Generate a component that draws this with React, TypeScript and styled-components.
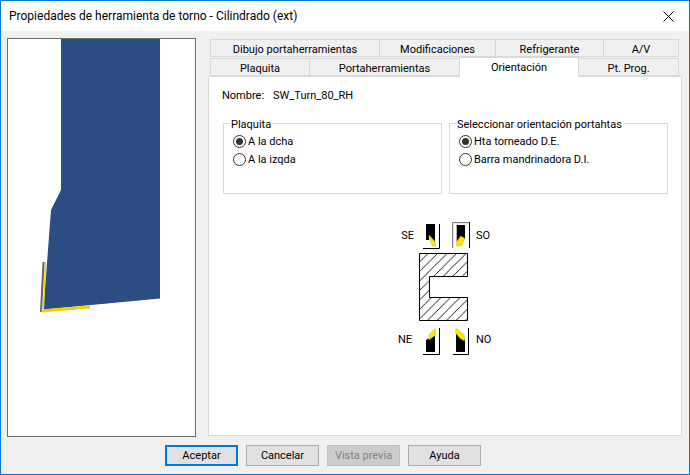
import { createGlobalStyle, styled } from "styled-components";

const GlobalStyle = createGlobalStyle`
  html, body { margin: 0; padding: 0; background: #f0f0f0; }
  body { font-family: Roboto, "Liberation Sans", sans-serif; font-size: 11px; color: #000; }
  * { box-sizing: border-box; }
`;

const Window = styled.div`
  width: 690px;
  height: 475px;
  border: 1px solid #0078d7;
  background: #f0f0f0;
  display: flex;
  flex-direction: column;
  overflow: hidden;
`;

const TitleBar = styled.div`
  height: 30px;
  flex: none;
  background: #fff;
  display: flex;
  align-items: center;
  justify-content: space-between;
  padding: 0 15px 0 8px;
  font-size: 12px;
`;

const Body = styled.div`
  display: flex;
  align-items: flex-start;
  gap: 12px;
  padding: 7px 0 0 6px;
`;

const Preview = styled.div`
  width: 189px;
  height: 399px;
  flex: none;
  background: #fff;
  border: 1px solid #6d6d6d;
`;

const PreviewDrawing = styled.svg`
  display: block;
`;

const TabColumn = styled.div`
  width: 474px;
  padding-top: 2px;
`;

const TabRow = styled.div<{ $height: number }>`
  display: flex;
  height: ${(p) => p.$height}px;
  padding-left: 2px;
  align-items: flex-end;
`;

const Tab = styled.div<{ $width: number; $active?: boolean }>`
  width: ${(p) => p.$width}px;
  height: ${(p) => (p.$active ? 20 : 18)}px;
  margin-bottom: ${(p) => (p.$active ? -1 : 0)}px;
  margin-right: -1px;
  background: ${(p) => (p.$active ? "#fff" : "#f0f0f0")};
  border: 1px solid #d9d9d9;
  border-bottom: ${(p) => (p.$active ? "none" : "1px solid #d9d9d9")};
  display: flex;
  align-items: center;
  justify-content: center;
  position: relative;
  z-index: ${(p) => (p.$active ? 2 : 0)};
  padding-top: ${(p) => (p.$active ? 0 : 2)}px;
  padding-bottom: ${(p) => (p.$active ? 1 : 0)}px;
  white-space: nowrap;
`;

const Panel = styled.div`
  height: 360px;
  background: #fff;
  border: 1px solid #d9d9d9;
  padding: 11px 13px 0;
`;

const NameLine = styled.div`
  display: flex;
  gap: 9px;
  height: 15px;
  line-height: 15px;
`;

const Groups = styled.div`
  display: flex;
  gap: 7px;
  margin: 20px 0 0 1px;
`;

const GroupBox = styled.div`
  position: relative;
  width: 219px;
  height: 71px;
  border: 1px solid #d9d9d9;
  padding: 8px 0 0 9px;
`;

const GroupTitle = styled.span`
  position: absolute;
  top: -7px;
  left: 6px;
  background: #fff;
  padding: 0 1px;
  line-height: 15px;
`;

const RadioRow = styled.div`
  display: flex;
  align-items: center;
  gap: 2px;
  height: 18px;
`;

const RadioMark = styled.span<{ $checked?: boolean }>`
  width: 13px;
  height: 13px;
  border: 1px solid #333;
  border-radius: 50%;
  display: flex;
  align-items: center;
  justify-content: center;
  &::after {
    content: "";
    width: 7px;
    height: 7px;
    border-radius: 50%;
    background: ${(p) => (p.$checked ? "#333" : "transparent")};
  }
`;

const Diagram = styled.div`
  margin: 28px 0 0 172px;
  width: 110px;
  display: flex;
  flex-direction: column;
`;

const ToolRow = styled.div<{ $height: number }>`
  display: grid;
  grid-template-columns: 29px 18px 11px 18px 1fr;
  height: ${(p) => p.$height}px;
  align-items: center;
`;

const CornerLabel = styled.span<{ $side: "left" | "right"; $inset?: number; $lift?: number }>`
  text-align: ${(p) => p.$side};
  padding-${(p) => p.$side}: ${(p) => p.$inset ?? 0}px;
  padding-bottom: ${(p) => p.$lift ?? 0}px;
  line-height: 14px;
`;

const ToolIcon = styled.svg`
  display: block;
`;

const Section = styled.svg`
  display: block;
  margin: 4px 0 6px 25px;
`;

const Footer = styled.div`
  display: flex;
  gap: 8px;
  margin: 8px 0 0 164px;
`;

const Button = styled.button<{ $default?: boolean; $disabled?: boolean }>`
  width: 73px;
  height: 21px;
  padding: 0;
  font: inherit;
  color: ${(p) => (p.$disabled ? "#838383" : "#000")};
  background: ${(p) => (p.$disabled ? "#cccccc" : "#e1e1e1")};
  border: ${(p) =>
    p.$default ? "2px solid #0078d7" : p.$disabled ? "1px solid #bfbfbf" : "1px solid #adadad"};
`;

const topTabs = [
  { label: "Dibujo portaherramientas", width: 170 },
  { label: "Modificaciones", width: 117 },
  { label: "Refrigerante", width: 109 },
  { label: "A/V", width: 76 },
];

const bottomTabs = [
  { label: "Plaquita", width: 100 },
  { label: "Portaherramientas", width: 151 },
  { label: "Orientación", width: 120, active: true },
  { label: "Pt. Prog.", width: 101 },
];

const Blade = ({ body, tip }: { body: string; tip: string }) => (
  <>
    <path d={body} fill="#000" />
    <path d={tip} fill="#ffe800" stroke="#b8a800" strokeWidth="0.4" />
  </>
);

const App = () => (
  <>
    <GlobalStyle />
    <Window>
      <TitleBar>
        <span>Propiedades de herramienta de torno - Cilindrado (ext)</span>
        <svg width="11" height="11" viewBox="0 0 11 11">
          <path d="M0.5 0.5 L10.5 10.5 M10.5 0.5 L0.5 10.5" stroke="#000" strokeWidth="1" fill="none" />
        </svg>
      </TitleBar>
      <Body>
        <Preview>
          <PreviewDrawing width="187" height="397" viewBox="8 39 187 397">
            <path d="M61 38 H160 V298.5 L43.5 309.5 L51 210 L61 190 Z" fill="#2b4d83" />
            <path d="M101 38 V303" stroke="#294a80" strokeWidth="1" opacity="0.6" />
            <path d="M45.5 262 L43.5 308" stroke="#f2cf00" strokeWidth="1.4" fill="none" />
            <path d="M43.5 262 L41 312" stroke="#666" strokeWidth="2" fill="none" />
            <path d="M41.5 311 L90 307" stroke="#f2cf00" strokeWidth="3" fill="none" />
          </PreviewDrawing>
        </Preview>
        <TabColumn>
          <TabRow $height={17}>
            {topTabs.map((t) => (
              <Tab key={t.label} $width={t.width}>{t.label}</Tab>
            ))}
          </TabRow>
          <TabRow $height={19}>
            {bottomTabs.map((t) => (
              <Tab key={t.label} $width={t.width} $active={t.active}>{t.label}</Tab>
            ))}
          </TabRow>
          <Panel>
            <NameLine>
              <span>Nombre:</span>
              <span>SW_Turn_80_RH</span>
            </NameLine>
            <Groups>
              <GroupBox>
                <GroupTitle>Plaquita</GroupTitle>
                <RadioRow><RadioMark $checked />A la dcha</RadioRow>
                <RadioRow><RadioMark />A la izqda</RadioRow>
              </GroupBox>
              <GroupBox>
                <GroupTitle>Seleccionar orientación portahtas</GroupTitle>
                <RadioRow><RadioMark $checked />Hta torneado D.E.</RadioRow>
                <RadioRow><RadioMark />Barra mandrinadora D.I.</RadioRow>
              </GroupBox>
            </Groups>
            <Diagram>
              <ToolRow $height={27}>
                <CornerLabel $side="right" $inset={9}>SE</CornerLabel>
                <ToolIcon width="18" height="27" viewBox="0 0 18 27">
                  <path d="M0 26.5 H16.5 V2" stroke="#000" fill="none" />
                  <Blade body="M3 2 H12 V20 L6 14 V18 H3 Z" tip="M6 13 L12 19.5 L12.6 24 L9.7 24 L6 16 Z" />
                </ToolIcon>
                <span />
                <ToolIcon width="18" height="27" viewBox="0 0 18 27">
                  <path d="M0.5 26 V0.5 H17" stroke="#808080" fill="none" />
                  <path d="M17.5 0 V26" stroke="#000" fill="none" />
                  <path d="M1.5 26 V1.5 H17" stroke="#e8e8e8" fill="none" />
                  <Blade body="M4.7 3 H13 V17 L8.7 16 L4.7 20 Z" tip="M8.7 14 L13 16.5 L9.7 24 L4.7 24 L4.7 19.7 Z" />
                </ToolIcon>
                <CornerLabel $side="left" $inset={6}>SO</CornerLabel>
              </ToolRow>
              <Section width="50" height="69" viewBox="0 0 50 69">
                <defs>
                  <pattern id="hatch" width="9.5" height="9.5" patternUnits="userSpaceOnUse">
                    <path d="M-1 10.5 L10.5 -1" stroke="#000" strokeWidth="0.9" />
                  </pattern>
                </defs>
                <path d="M0.5 0.5 H48.5 V23.5 H10.5 V44.5 H48.5 V67.5 H0.5 Z" fill="url(#hatch)" stroke="#000" />
              </Section>
              <ToolRow $height={27}>
                <CornerLabel $side="right" $inset={11} $lift={3}>NE</CornerLabel>
                <ToolIcon width="18" height="27" viewBox="0 0 18 27">
                  <path d="M0 26.5 H16.5 V0" stroke="#000" fill="none" />
                  <Blade body="M3 12 L12 7 V24 H3 Z" tip="M6 7 L11.3 1 L12.7 1 L12.7 7 L6 12 Z" />
                </ToolIcon>
                <span />
                <ToolIcon width="18" height="27" viewBox="0 0 18 27">
                  <path d="M1 26.5 H16.5 V0" stroke="#000" fill="none" />
                  <Blade body="M4 5 L13 12 V24 H4 Z" tip="M3.7 1 L5.7 1 L12.3 7 L12.3 13 L8 10.3 L3.7 5.3 Z" />
                </ToolIcon>
                <CornerLabel $side="left" $inset={6} $lift={3}>NO</CornerLabel>
              </ToolRow>
            </Diagram>
          </Panel>
        </TabColumn>
      </Body>
      <Footer>
        <Button $default>Aceptar</Button>
        <Button>Cancelar</Button>
        <Button $disabled>Vista previa</Button>
        <Button>Ayuda</Button>
      </Footer>
    </Window>
  </>
);

export default App;
